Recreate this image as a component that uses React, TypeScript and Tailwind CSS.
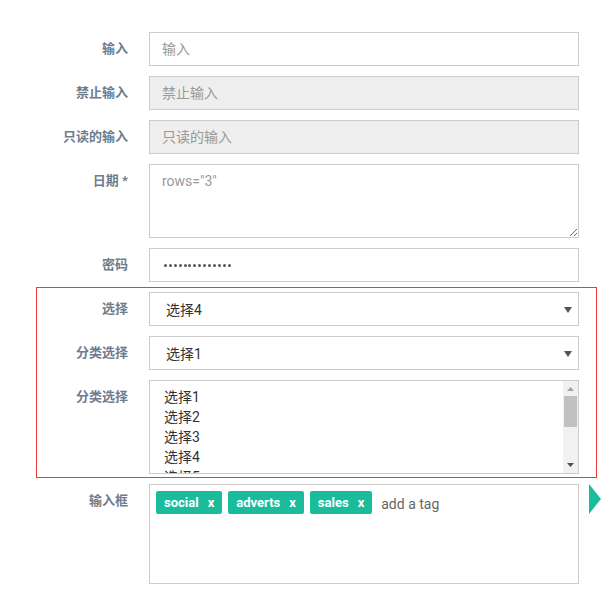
const font = { fontFamily: '"Roboto", "Noto Sans CJK SC", sans-serif' };

function Label({ children, w }: { children: React.ReactNode; w: string }) {
  return (
    <div className={`${w} shrink-0 pr-[21px] pt-[8px] text-right text-[13px] font-bold leading-[18px] text-[#6f7c8e]`}>
      {children}
    </div>
  );
}

function Caret() {
  return (
    <svg width="8" height="6" viewBox="0 0 8 6" className="absolute right-[6px] top-[14px]">
      <path d="M0 0h8L4 6z" fill="#555" />
    </svg>
  );
}

export default function App() {
  const tags = ["social", "adverts", "sales"];
  return (
    <div className="relative h-[596px] w-[610px] bg-white pt-[32px]" style={font}>
      <div className="flex flex-col gap-[10px]">
        <div className="flex">
          <Label w="w-[149px]">输入</Label>
          <input
            placeholder="输入"
            className="h-[34px] w-[430px] border border-[#ccc] px-[12px] text-[14px] text-[#333] placeholder:text-[#999] outline-none"
          />
        </div>
        <div className="flex">
          <Label w="w-[149px]">禁止输入</Label>
          <input
            disabled
            placeholder="禁止输入"
            className="h-[34px] w-[430px] border border-[#ccc] bg-[#eee] px-[12px] text-[14px] placeholder:text-[#999] outline-none"
          />
        </div>
        <div className="flex">
          <Label w="w-[149px]">只读的输入</Label>
          <input
            readOnly
            placeholder="只读的输入"
            className="h-[34px] w-[430px] border border-[#ccc] bg-[#eee] px-[12px] text-[14px] placeholder:text-[#999] outline-none"
          />
        </div>
        <div className="flex">
          <Label w="w-[149px]">日期 *</Label>
          <textarea
            rows={3}
            placeholder={'rows="3"'}
            className="h-[74px] w-[430px] resize-y border border-[#ccc] px-[12px] py-[6px] text-[14px] leading-[20px] placeholder:text-[#999] outline-none"
          />
        </div>
        <div className="flex">
          <Label w="w-[149px]">密码</Label>
          <div className="flex h-[34px] w-[430px] items-center gap-[1.9px] border border-[#ccc] pl-[14px]">
            {Array.from({ length: 14 }).map((_, i) => (
              <span key={i} className="h-[3px] w-[3px] rounded-full bg-[#555]" />
            ))}
          </div>
        </div>
      </div>

      <div className="ml-[36px] mt-[5px] flex w-[561px] flex-col gap-[10px] border border-[#f03a3a] pb-[3px] pt-[4px]">
        <div className="flex">
          <Label w="w-[112px]">选择</Label>
          <div className="relative flex h-[34px] w-[430px] items-center border border-[#ccc] pl-[16px] pt-[2px] text-[14px] text-[#333]">
            选择4
            <Caret />
          </div>
        </div>
        <div className="flex">
          <Label w="w-[112px]">分类选择</Label>
          <div className="relative flex h-[34px] w-[430px] items-center border border-[#ccc] pl-[16px] pt-[2px] text-[14px] text-[#333]">
            选择1
            <Caret />
          </div>
        </div>
        <div className="flex">
          <Label w="w-[112px]">分类选择</Label>
          <div className="flex h-[94px] w-[430px] overflow-hidden border border-[#ccc]">
            <div className="flex-1 pl-[14px] pt-[6px] text-[14px] leading-[20px] text-[#333]">
              <div>选择1</div>
              <div>选择2</div>
              <div>选择3</div>
              <div>选择4</div>
              <div>选择5</div>
            </div>
            <div className="flex w-[15px] flex-col items-center bg-[#f1f1f1]">
              <svg width="7" height="4" viewBox="0 0 7 4" className="mt-[6px]">
                <path d="M0 4h7L3.5 0z" fill="#a3a3a3" />
              </svg>
              <div className="mt-[5px] h-[31px] w-[13px] bg-[#c1c1c1]" />
              <svg width="7" height="4" viewBox="0 0 7 4" className="mt-auto mb-[6px]">
                <path d="M0 0h7L3.5 4z" fill="#505050" />
              </svg>
            </div>
          </div>
        </div>
      </div>

      <div className="mt-[6px] flex">
        <Label w="w-[149px]">输入框</Label>
        <div className="flex h-[100px] w-[430px] items-start gap-[6px] border border-[#ccc] pl-[6px] pt-[6px]">
          {tags.map((t) => (
            <span
              key={t}
              className="flex h-[23px] items-center gap-[9px] rounded-[2px] bg-[#1abc9c] px-[8px] text-[13px] font-bold text-white"
            >
              {t}
              <span>x</span>
            </span>
          ))}
          <span className="ml-[3px] pt-[4px] text-[14px] leading-[18px] text-[#666]">add a tag</span>
        </div>
        <svg width="12" height="30" viewBox="0 0 12 30" className="ml-[10px]">
          <path d="M0 0L12 15L0 30z" fill="#1abc9c" />
        </svg>
      </div>
    </div>
  );
}
